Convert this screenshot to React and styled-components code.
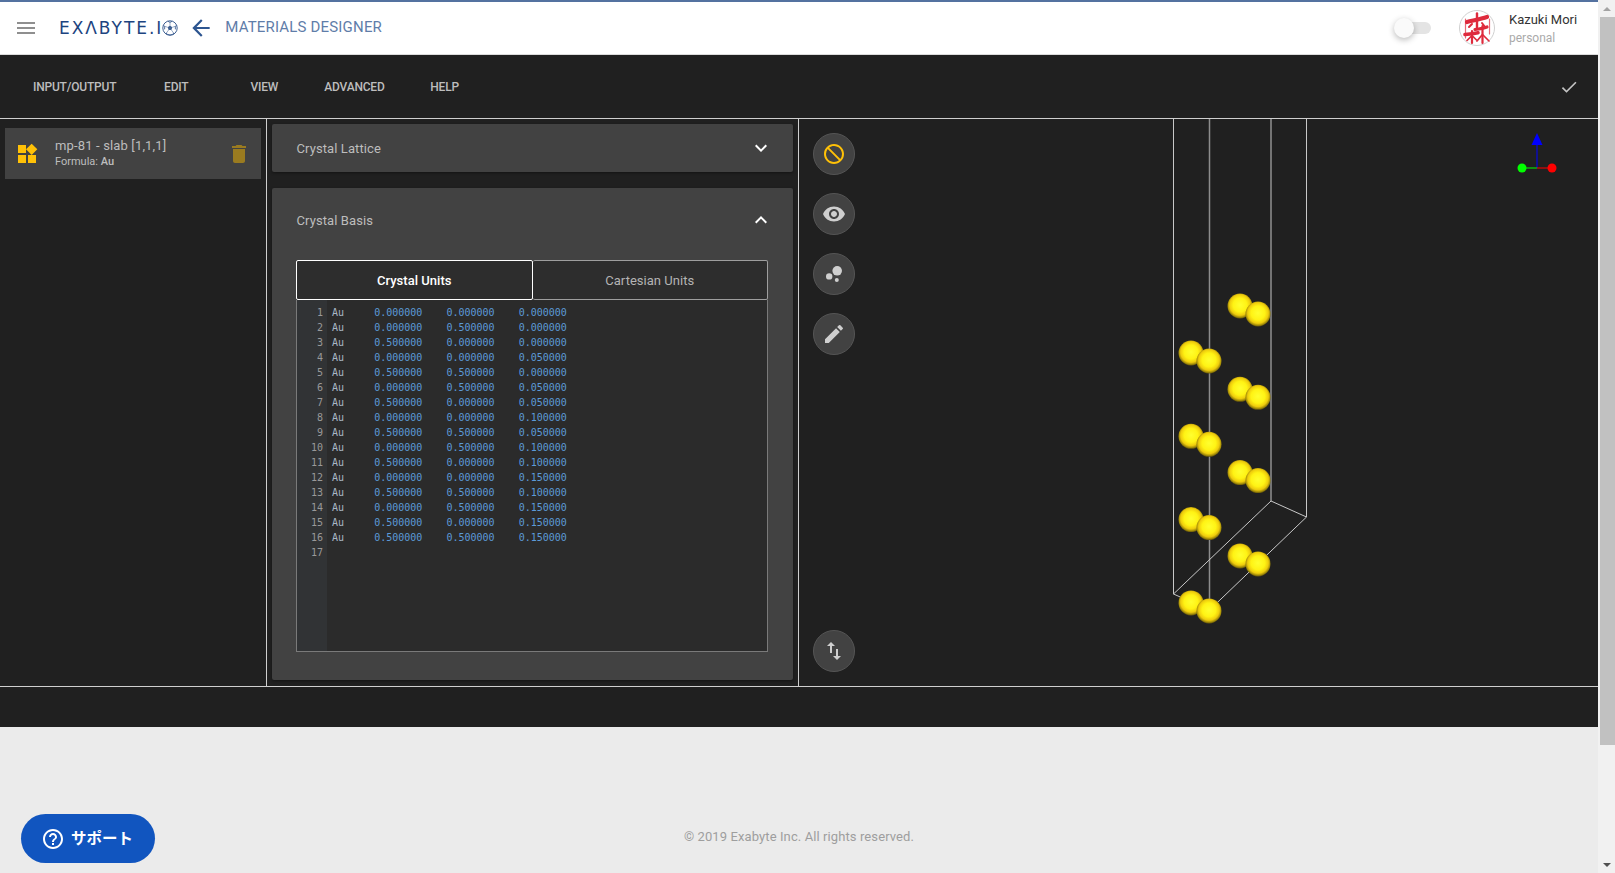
import React from "react";
import styled, { createGlobalStyle } from "styled-components";
import {
  MdMenu,
  MdArrowBack,
  MdCheck,
  MdWidgets,
  MdDelete,
  MdExpandMore,
  MdExpandLess,
  MdBlock,
  MdVisibility,
  MdBubbleChart,
  MdEdit,
  MdSwapVert,
  MdHelpOutline,
} from "react-icons/md";

const GlobalStyle = createGlobalStyle`
  html, body {
    margin: 0;
    padding: 0;
    height: 100%;
    overflow: hidden;
    font-family: Roboto, "Liberation Sans", sans-serif;
  }
  * { box-sizing: border-box; }
`;

const Page = styled.div`
  display: flex;
  width: 1615px;
  height: 873px;
  overflow: hidden;
  position: relative;
`;

const Main = styled.div`
  display: flex;
  flex-direction: column;
  flex: 1;
  min-width: 0;
  background: #ebebeb;
`;

/* Header */
const Header = styled.header`
  display: flex;
  align-items: center;
  height: 55px;
  flex-shrink: 0;
  background: #fff;
  border-top: 2px solid #5472a0;
  border-bottom: 1px solid #dcdcdc;
  padding: 0 20px 0 14px;
`;

const MenuIcon = styled(MdMenu)`
  font-size: 24px;
  color: #8f8f8f;
`;

const Logo = styled.div`
  display: flex;
  align-items: center;
  margin-left: 21px;
  color: #1d4480;
  font-family: "DejaVu Sans", sans-serif;
  font-size: 17px;
  letter-spacing: 1.95px;
  line-height: 1;
`;

const LogoBall = styled.svg`
  width: 16px;
  height: 16px;
  margin-left: -1px;
`;

const BackIcon = styled(MdArrowBack)`
  font-size: 26px;
  color: #2d5590;
  margin-left: 10px;
`;

const PageTitle = styled.div`
  margin: 0 0 2px 11px;
  font-size: 15px;
  letter-spacing: 0.18px;
  color: #5f7da9;
`;

const HeaderRight = styled.div`
  display: flex;
  align-items: center;
  margin-left: auto;
`;

const Toggle = styled.div`
  position: relative;
  width: 28px;
  height: 12px;
  border-radius: 6px;
  background: #e4e4e4;
  margin-right: 28px;
`;

const ToggleThumb = styled.div`
  position: absolute;
  left: -9px;
  top: -4px;
  width: 20px;
  height: 20px;
  border-radius: 50%;
  background: #fafafa;
  box-shadow: 0 2px 6px rgba(0, 0, 0, 0.28);
`;

const Avatar = styled.svg`
  width: 36px;
  height: 36px;
  margin-right: 14px;
`;

const UserBlock = styled.div`
  display: flex;
  flex-direction: column;
  width: 69px;
  gap: 4px;
  padding-top: 2px;
`;

const UserName = styled.div`
  font-size: 13px;
  line-height: 15px;
  color: #333;
`;

const UserRole = styled.div`
  font-size: 12px;
  line-height: 15px;
  color: #aaa;
`;

/* Toolbar */
const Toolbar = styled.nav`
  display: flex;
  align-items: center;
  height: 64px;
  flex-shrink: 0;
  padding: 0 19px 0 17px;
  background: #202020;
  border-bottom: 1px solid #cfcfcf;
`;

const ToolButton = styled.div`
  min-width: 88px;
  padding: 0 16px;
  text-align: center;
  font-size: 12px;
  font-weight: 500;
  letter-spacing: -0.2px;
  color: #bdbdbd;
`;

const DoneIcon = styled(MdCheck)`
  margin-left: auto;
  font-size: 20px;
  color: #c4c4c4;
`;

/* Body panels */
const Panels = styled.div`
  display: flex;
  height: 568px;
  flex-shrink: 0;
  background: #202020;
  border-bottom: 1px solid #cfcfcf;
`;

const Sidebar = styled.aside`
  width: 267px;
  flex-shrink: 0;
  padding: 9px 5px 0;
  border-right: 1px solid #cfcfcf;
`;

const MaterialItem = styled.div`
  display: flex;
  align-items: center;
  width: 256px;
  height: 51px;
  padding: 0 10px 0 10px;
  background: #424242;
`;

const MaterialIcon = styled(MdWidgets)`
  font-size: 24px;
  color: #ffc107;
`;

const MaterialText = styled.div`
  display: flex;
  flex-direction: column;
  margin-left: 16px;
`;

const MaterialName = styled.div`
  font-size: 13px;
  line-height: 16px;
  letter-spacing: 0.15px;
  color: #bdbdbd;
`;

const MaterialFormula = styled.div`
  margin-top: 1px;
  font-size: 11px;
  line-height: 14px;
  color: #bdbdbd;

  b {
    font-weight: 500;
  }
`;

const TrashIcon = styled(MdDelete)`
  margin-left: auto;
  font-size: 24px;
  color: #9a7b20;
`;

const Center = styled.section`
  display: flex;
  flex-direction: column;
  gap: 16px;
  width: 532px;
  flex-shrink: 0;
  padding: 5px 5px 6px;
  border-right: 1px solid #cfcfcf;
`;

const Card = styled.div`
  display: flex;
  flex-direction: column;
  flex: ${(p) => (p.$grow ? 1 : "none")};
  background: #424242;
  border-radius: 2px;
  box-shadow: 0 1px 3px rgba(0, 0, 0, 0.4);
  padding: 0 25px 0 24px;
`;

const CardHeader = styled.div`
  display: flex;
  align-items: center;
  justify-content: space-between;
  height: ${(p) => p.$height}px;
  flex-shrink: 0;
  padding-left: 0.5px;
  font-size: 13px;
  color: #bdbdbd;
  letter-spacing: 0.1px;

  svg {
    font-size: 24px;
    color: #fff;
    margin-right: -5px;
  }
`;

const Tabs = styled.div`
  display: flex;
  margin-top: 8px;
  height: 40px;
`;

const Tab = styled.div`
  display: flex;
  align-items: center;
  justify-content: center;
  flex: 1;
  background: #2d2d2d;
  border: 1px solid ${(p) => (p.$active ? "#fff" : "#9e9e9e")};
  border-left-width: ${(p) => (p.$active ? 1 : 0)}px;
  border-radius: 2px;
  font-size: 13px;
  letter-spacing: 0.03px;
  font-weight: ${(p) => (p.$active ? 500 : 400)};
  color: ${(p) => (p.$active ? "#fff" : "#b4b4b4")};
`;

const Editor = styled.div`
  display: flex;
  height: 352px;
  background: #2b2b2b;
  border: 1px solid #7a7a7a;
  border-top: 0;
  font-family: "DejaVu Sans Mono", "Liberation Mono", monospace;
  font-size: 10px;
  line-height: 15px;
`;

const Gutter = styled.div`
  width: 30px;
  padding: 5px 4px 0 0;
  background: #313335;
  color: #999;
  text-align: right;
  flex-shrink: 0;
`;

const Code = styled.pre`
  margin: 0;
  padding: 5px 0 0 5px;
  font: inherit;
  color: #a9b7c6;
`;

const Coord = styled.span`
  color: #5c9ad8;
`;

/* Viewer */
const Viewer = styled.section`
  position: relative;
  flex: 1;
  display: flex;
  flex-direction: column;
  gap: 18px;
  padding: 14px 0 14px 14px;
`;

const Scene = styled.svg`
  position: absolute;
  left: 0;
  top: 0;
  width: 100%;
  height: 100%;
`;

const RoundButton = styled.div`
  position: relative;
  display: flex;
  align-items: center;
  justify-content: center;
  width: 42px;
  height: 42px;
  border-radius: 50%;
  background: #424242;
  border: 1px solid #555;
  font-size: 24px;
  color: ${(p) => (p.$accent ? "#ffc107" : "#cfcfcf")};
  margin-top: ${(p) => (p.$bottom ? "auto" : 0)};
`;

// the slash in the reference runs from top left to bottom right
const BlockIcon = styled(MdBlock)`
  transform: scaleX(-1);
`;

const BottomBar = styled.div`
  height: 40px;
  flex-shrink: 0;
  background: #202020;
`;

const Footer = styled.footer`
  flex: 1;
  padding-top: 102px;
  text-align: center;
  font-size: 13px;
  letter-spacing: 0.1px;
  line-height: 16px;
  color: #9e9e9e;
`;

const SupportButton = styled.div`
  position: absolute;
  left: 21px;
  top: 814px;
  display: flex;
  align-items: center;
  justify-content: center;
  gap: 6px;
  width: 134px;
  height: 49px;
  padding-right: 2px;
  border-radius: 25px;
  background: #1155bf;
  color: #fff;
  font-family: "Noto Sans CJK JP", sans-serif;
  font-size: 15.5px;
  font-weight: 700;

  svg {
    font-size: 24px;
  }
`;

const SupportLabel = styled.span`
  margin-bottom: 3px;
`;

/* Fake browser scrollbar */
const Scrollbar = styled.div`
  display: flex;
  flex-direction: column;
  width: 17px;
  flex-shrink: 0;
  background: #f1f1f1;
`;

const ScrollArrow = styled.div`
  display: flex;
  align-items: center;
  justify-content: center;
  height: 17px;
  flex-shrink: 0;

  &::before {
    content: "";
    border-left: 4px solid transparent;
    border-right: 4px solid transparent;
    border-bottom: ${(p) => (p.$up ? "4px solid #a3a3a3" : "0")};
    border-top: ${(p) => (p.$up ? "0" : "4px solid #505050")};
  }
`;

const ScrollThumb = styled.div`
  height: 728px;
  margin-left: 2px;
  background: #c1c1c1;
`;

const ScrollSpace = styled.div`
  flex: 1;
`;

const rows = [
  ["0.000000", "0.000000", "0.000000"],
  ["0.000000", "0.500000", "0.000000"],
  ["0.500000", "0.000000", "0.000000"],
  ["0.000000", "0.000000", "0.050000"],
  ["0.500000", "0.500000", "0.000000"],
  ["0.000000", "0.500000", "0.050000"],
  ["0.500000", "0.000000", "0.050000"],
  ["0.000000", "0.000000", "0.100000"],
  ["0.500000", "0.500000", "0.050000"],
  ["0.000000", "0.500000", "0.100000"],
  ["0.500000", "0.000000", "0.100000"],
  ["0.000000", "0.000000", "0.150000"],
  ["0.500000", "0.500000", "0.100000"],
  ["0.000000", "0.500000", "0.150000"],
  ["0.500000", "0.000000", "0.150000"],
  ["0.500000", "0.500000", "0.150000"],
];

// scene coordinates are relative to the viewer, whose corner is at 799,119
const ox = 799;
const oy = 119;
const levels = [0, 83.3, 166.6, 249.9];
const frontPair = [
  [1240, 306],
  [1258, 314],
];
const backPair = [
  [1191, 353],
  [1209, 361],
];

function Atom({ x, y }) {
  return <circle cx={x - ox} cy={y - oy} r="12.5" fill="url(#gold)" />;
}

function SceneDrawing() {
  const line = (x1, y1, x2, y2, stroke = "#c8c8c8", w = 1) => (
    <line
      x1={x1 - ox}
      y1={y1 - oy}
      x2={x2 - ox}
      y2={y2 - oy}
      stroke={stroke}
      strokeWidth={w}
    />
  );
  return (
    <Scene>
      <defs>
        <radialGradient id="gold" cx="50%" cy="46%" r="53%">
          <stop offset="0%" stopColor="#ffff30" />
          <stop offset="52%" stopColor="#fff314" />
          <stop offset="78%" stopColor="#eecb0c" />
          <stop offset="93%" stopColor="#a08a08" />
          <stop offset="100%" stopColor="#6d5c08" />
        </radialGradient>
      </defs>
      {line(1173.5, 119, 1173.5, 594)}
      {line(1209.5, 119, 1209.5, 610, "#8c8c8c", 1.5)}
      {line(1271, 119, 1271, 501)}
      {line(1306.5, 119, 1306.5, 517)}
      {line(1173.5, 594, 1271, 501)}
      {line(1271, 501, 1306.5, 517)}
      {line(1306.5, 517, 1209.5, 610)}
      {line(1173.5, 594, 1209.5, 610)}
      {levels.map((d) => (
        <g key={d}>
          <Atom x={frontPair[0][0]} y={frontPair[0][1] + d} />
          <Atom x={frontPair[1][0]} y={frontPair[1][1] + d} />
          <Atom x={backPair[0][0]} y={backPair[0][1] + d} />
          <Atom x={backPair[1][0]} y={backPair[1][1] + d} />
        </g>
      ))}
      {line(1537, 168, 1537, 140, "#0000ff")}
      {line(1537, 168, 1522, 168, "#00ff00")}
      {line(1537, 168, 1552, 168, "#ff0000")}
      <polygon
        points={`${1537 - ox},${133 - oy} ${1531.5 - ox},${145 - oy} ${1542.5 - ox},${145 - oy}`}
        fill="#0000ff"
      />
      <circle cx={1522 - ox} cy={168 - oy} r="4.5" fill="#00ff00" />
      <circle cx={1552 - ox} cy={168 - oy} r="4.5" fill="#ff0000" />
    </Scene>
  );
}

export default function App() {
  return (
    <Page>
      <GlobalStyle />
      <Main>
        <Header>
          <MenuIcon />
          <Logo>
            EXΛBYTE.I
            <LogoBall viewBox="0 0 16 16">
              <circle cx="8" cy="8" r="7.2" fill="none" stroke="#3f6193" strokeWidth="1" />
              <polygon points="8,5.6 10.3,7.3 9.4,10 6.6,10 5.7,7.3" fill="#3f6193" />
              <path
                d="M8 5.600V2.400M10.300 7.300l3-1M9.400 10l1.900 2.600M6.600 10l-1.900 2.600M5.700 7.300l-3-1"
                stroke="#6f8ab2"
                strokeWidth="0.7"
              />
              <path
                d="M5.800 1.200L8 2.400l2.200-1.200M1.200 5.400l1.500.9-.1 3M14.800 5.400l-1.500.9.100 3M4.700 12.600l-.2 1.600 3.500.9M11.300 12.600l.2 1.600-3.500.9"
                fill="none"
                stroke="#3f6193"
                strokeWidth="0.9"
              />
            </LogoBall>
          </Logo>
          <BackIcon />
          <PageTitle>MATERIALS DESIGNER</PageTitle>
          <HeaderRight>
            <Toggle>
              <ToggleThumb />
            </Toggle>
            <Avatar viewBox="0 0 36 36">
              <circle cx="18" cy="18" r="17.5" fill="#fff" stroke="#d0d0d0" />
              <g stroke="#de2a3c" fill="none" strokeLinecap="round">
                <path d="M8 12C14 10.500 22 9 28 7" strokeWidth="4.200" />
                <path d="M18 3.500v14" strokeWidth="2.400" />
                <path d="M13 14l-3 3M23 13l3 4" strokeWidth="2" />
                <path d="M6.500 9v19M30.500 9v15" strokeWidth="1.200" opacity="0.7" />
                <path d="M16 19.500c4-.5 8-1 12-2.500" strokeWidth="3.200" />
                <path d="M6 24.500c4-.4 9-1 13-1.800" strokeWidth="3.600" />
                <path d="M23.500 16v17M13 21v12" strokeWidth="2.200" />
                <path d="M23 25l-5 6M24 25l6 6M12.500 26l-4.500 4.500M13.500 26l4 4" strokeWidth="1.700" />
              </g>
            </Avatar>
            <UserBlock>
              <UserName>Kazuki Mori</UserName>
              <UserRole>personal</UserRole>
            </UserBlock>
          </HeaderRight>
        </Header>

        <Toolbar>
          <ToolButton>INPUT/OUTPUT</ToolButton>
          <ToolButton>EDIT</ToolButton>
          <ToolButton>VIEW</ToolButton>
          <ToolButton>ADVANCED</ToolButton>
          <ToolButton>HELP</ToolButton>
          <DoneIcon />
        </Toolbar>

        <Panels>
          <Sidebar>
            <MaterialItem>
              <MaterialIcon />
              <MaterialText>
                <MaterialName>mp-81 - slab [1,1,1]</MaterialName>
                <MaterialFormula>
                  Formula: <b>Au</b>
                </MaterialFormula>
              </MaterialText>
              <TrashIcon />
            </MaterialItem>
          </Sidebar>

          <Center>
            <Card>
              <CardHeader $height={48}>
                Crystal Lattice
                <MdExpandMore />
              </CardHeader>
            </Card>
            <Card $grow>
              <CardHeader $height={64}>
                Crystal Basis
                <MdExpandLess />
              </CardHeader>
              <Tabs>
                <Tab $active>Crystal Units</Tab>
                <Tab>Cartesian Units</Tab>
              </Tabs>
              <Editor>
                <Gutter>
                  {Array.from({ length: 17 }, (_, i) => (
                    <div key={i}>{i + 1}</div>
                  ))}
                </Gutter>
                <Code>
                  {rows.map((r, i) => (
                    <div key={i}>
                      {"Au     "}
                      <Coord>{r[0]}</Coord>
                      {"    "}
                      <Coord>{r[1]}</Coord>
                      {"    "}
                      <Coord>{r[2]}</Coord>
                    </div>
                  ))}
                </Code>
              </Editor>
            </Card>
          </Center>

          <Viewer>
            <SceneDrawing />
            <RoundButton $accent>
              <BlockIcon />
            </RoundButton>
            <RoundButton>
              <MdVisibility />
            </RoundButton>
            <RoundButton>
              <MdBubbleChart />
            </RoundButton>
            <RoundButton>
              <MdEdit />
            </RoundButton>
            <RoundButton $bottom>
              <MdSwapVert />
            </RoundButton>
          </Viewer>
        </Panels>

        <BottomBar />
        <Footer>© 2019 Exabyte Inc. All rights reserved.</Footer>
      </Main>

      <Scrollbar>
        <ScrollArrow $up />
        <ScrollThumb />
        <ScrollSpace />
        <ScrollArrow />
      </Scrollbar>

      <SupportButton>
        <MdHelpOutline />
        <SupportLabel>サポート</SupportLabel>
      </SupportButton>
    </Page>
  );
}
